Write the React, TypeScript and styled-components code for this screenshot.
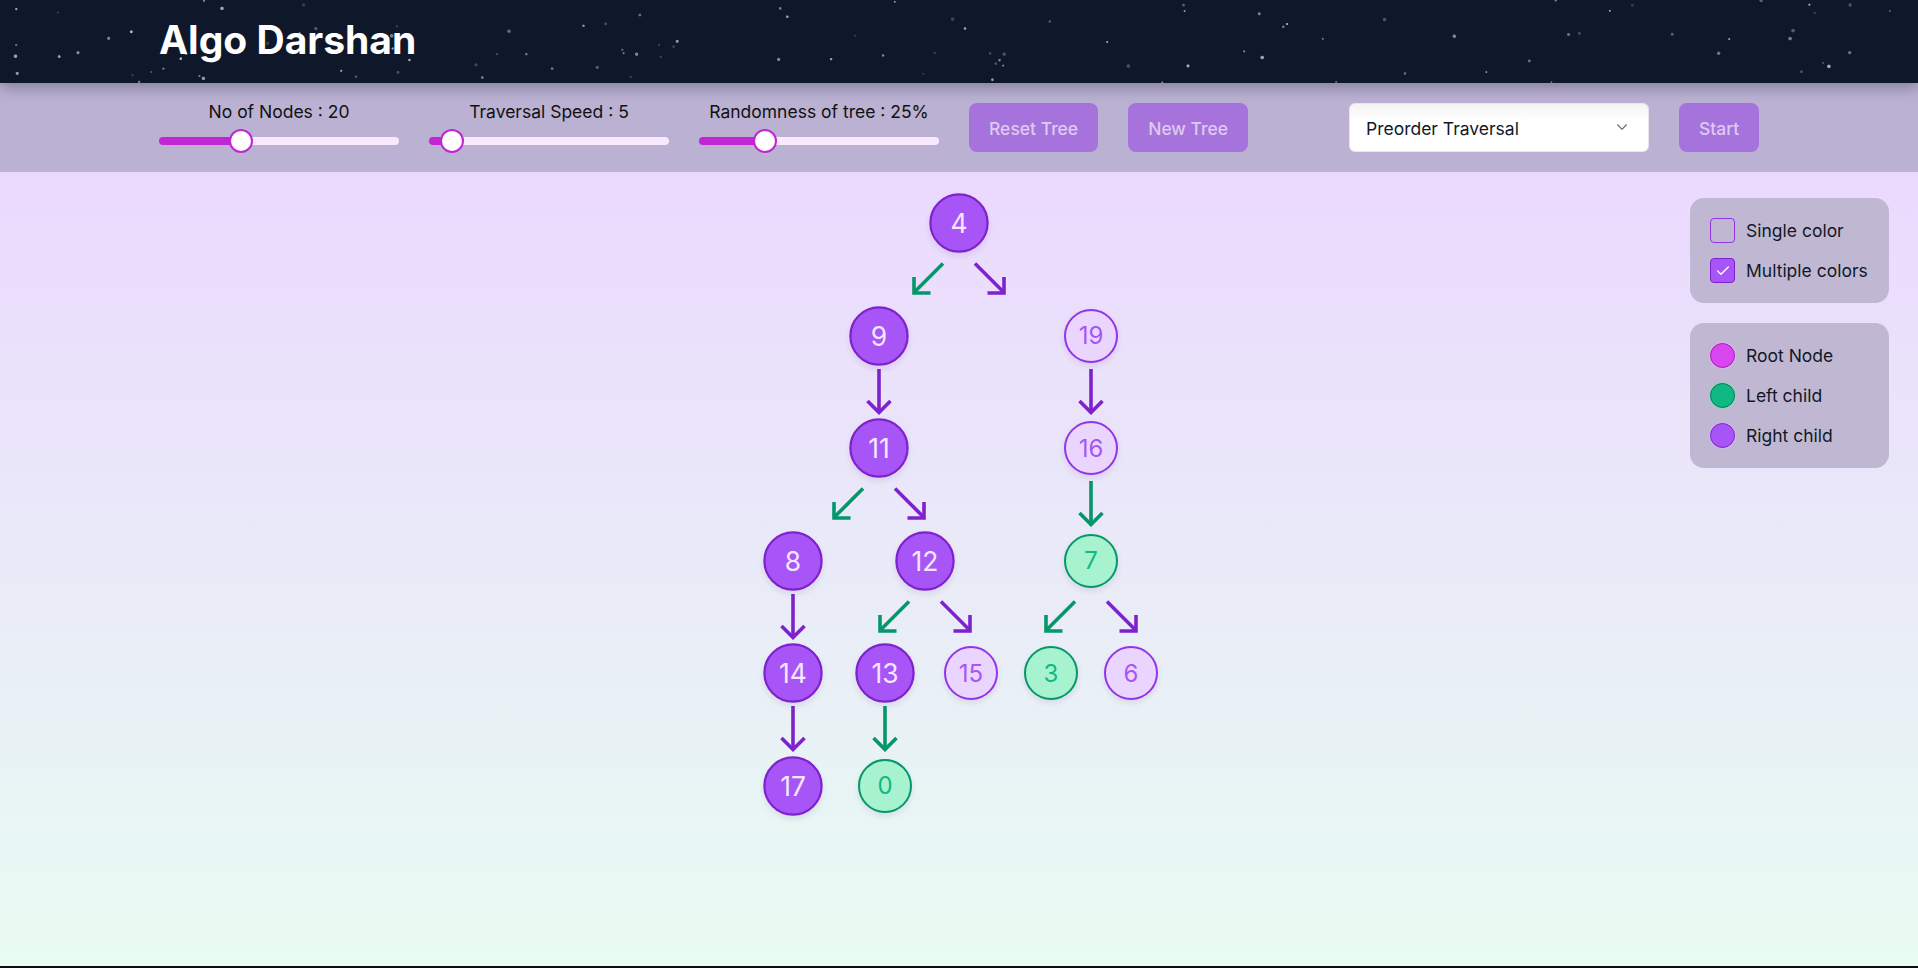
import React from 'react';
import styled, { createGlobalStyle } from 'styled-components';
import { Check, ChevronDown } from 'lucide-react';

type Side = 'root' | 'left' | 'right';

interface TreeNode {
  value: number;
  side: Side;
  visited: boolean;
  left?: TreeNode;
  right?: TreeNode;
}

const n = (value: number, side: Side, visited: boolean, left?: TreeNode, right?: TreeNode): TreeNode => ({
  value,
  side,
  visited,
  left,
  right,
});

// tree as it stands mid-way through the preorder walk
const tree: TreeNode = n(
  4,
  'root',
  true,
  n(
    9,
    'left',
    true,
    undefined,
    n(
      11,
      'right',
      true,
      n(8, 'left', true, undefined, n(14, 'right', true, undefined, n(17, 'right', true))),
      n(12, 'right', true, n(13, 'left', true, n(0, 'left', false)), n(15, 'right', false))
    )
  ),
  n(19, 'right', false, undefined, n(16, 'right', false, n(7, 'left', false, n(3, 'left', false), n(6, 'right', false))))
);

function makeStars(count: number, w: number, h: number) {
  let seed = 20240611;
  const rnd = () => {
    seed = (seed * 16807) % 2147483647;
    return seed / 2147483647;
  };
  const layers: string[] = [];
  for (let i = 0; i < count; i++) {
    const x = (rnd() * w).toFixed(1);
    const y = (rnd() * h).toFixed(1);
    const r = (0.45 + rnd() * 0.9).toFixed(2);
    const a = (0.15 + rnd() * 0.5).toFixed(2);
    layers.push(
      `radial-gradient(circle at ${x}px ${y}px, rgba(255,255,255,${a}) 0, rgba(255,255,255,${a}) ${r}px, transparent ${(
        parseFloat(r) + 0.9
      ).toFixed(2)}px)`
    );
  }
  return layers.join(',');
}

const stars = makeStars(105, 1918, 83);

const GlobalStyle = createGlobalStyle`
  html, body {
    margin: 0;
    padding: 0;
    background: #0b0d14;
  }
  body {
    font-family: Inter, "Noto Sans", "Liberation Sans", sans-serif;
  }
  * {
    box-sizing: border-box;
  }
`;

const Page = styled.div`
  display: flex;
  flex-direction: column;
  height: calc(100vh - 2px);
`;

const Header = styled.header`
  position: relative;
  z-index: 2;
  height: 83px;
  flex-shrink: 0;
  background-color: #0f172a;
  background-image: ${stars};
  box-shadow: 0 4px 14px rgba(15, 23, 42, 0.35);
`;

const Container = styled.div`
  width: 1600px;
  height: 100%;
  margin: 0 auto;
  display: flex;
  align-items: center;
`;

const Title = styled.h1`
  margin: 0;
  padding-bottom: 4px;
  font-size: 39px;
  font-weight: 700;
  line-height: 1;
  color: #ffffff;
`;

const Toolbar = styled.div`
  height: 89px;
  flex-shrink: 0;
  background: #bbb1d3;
`;

const ToolRow = styled(Container)`
  gap: 30px;

  & > * {
    flex-shrink: 0;
  }
`;

const SliderGroup = styled.label`
  width: 240px;
  display: flex;
  flex-direction: column;
  align-items: center;
  gap: 7px;
  margin-bottom: 1px;
`;

const SliderLabel = styled.span`
  font-size: 17.5px;
  line-height: 20px;
  color: #111111;
  white-space: nowrap;
`;

const Range = styled.input`
  -webkit-appearance: none;
  appearance: none;
  width: 100%;
  height: 24px;
  margin: 0;
  background: transparent;

  &::-webkit-slider-runnable-track {
    height: 8px;
    border-radius: 4px;
    background: linear-gradient(to right, #c026d3 var(--fill), #fae8ff var(--fill));
  }

  &::-webkit-slider-thumb {
    -webkit-appearance: none;
    width: 24px;
    height: 24px;
    margin-top: -8px;
    border-radius: 50%;
    background: #ffffff;
    border: 2px solid #c026d3;
  }
`;

const Button = styled.button`
  height: 49px;
  padding: 2px 20px 0;
  border: none;
  border-radius: 8px;
  background: #a673dc;
  color: #dccaf0;
  font-family: inherit;
  font-size: 17.5px;
  font-weight: 500;
  white-space: nowrap;
`;

const SelectWrap = styled.div`
  position: relative;
  width: 300px;
  height: 49px;
  margin-left: 71px;
  color: #6b7280;

  svg {
    position: absolute;
    right: 18px;
    top: 15px;
    pointer-events: none;
  }
`;

const Select = styled.select`
  -webkit-appearance: none;
  appearance: none;
  width: 100%;
  height: 100%;
  padding: 2px 44px 0 16px;
  border: 1px solid #e5e7eb;
  border-radius: 6px;
  background: linear-gradient(to bottom, #f4f4f5, #ffffff 35%);
  color: #111827;
  font-family: inherit;
  font-size: 17.5px;
`;

const Main = styled.main`
  flex: 1;
  display: grid;
  grid-template-columns: 1fr auto 1fr;
  align-items: start;
  background: linear-gradient(to bottom, #ebd9fe, #e8fcf2);
`;

const TreeArea = styled.div`
  grid-column: 2;
  padding-top: 21px;
`;

const Side = styled.aside`
  grid-column: 3;
  justify-self: end;
  margin: 26px 29px 0 0;
  display: flex;
  flex-direction: column;
  gap: 20px;
`;

const Card = styled.div`
  width: 199px;
  padding: 20px;
  border-radius: 14px;
  background: #c0b8d2;
  display: flex;
  flex-direction: column;
  gap: 15px;
`;

const Option = styled.label`
  display: flex;
  align-items: center;
  gap: 11px;
  height: 25px;
  font-size: 17.5px;
  color: #111827;
  white-space: nowrap;
`;

const Box = styled.span<{ $checked: boolean }>`
  width: 25px;
  height: 25px;
  border-radius: 4px;
  border: 1.5px solid ${p => (p.$checked ? '#7e22ce' : '#9333ea')};
  background: ${p => (p.$checked ? '#a855f7' : 'transparent')};
  display: flex;
  align-items: center;
  justify-content: center;
  color: #ffffff;
`;

const dotTones = {
  root: { fill: '#d946ef', edge: '#a21caf', ring: 'rgba(240, 171, 252, 0.6)' },
  left: { fill: '#10b981', edge: '#047857', ring: 'rgba(110, 231, 183, 0.6)' },
  right: { fill: '#a855f7', edge: '#7e22ce', ring: 'rgba(216, 180, 254, 0.6)' },
};

const Dot = styled.span<{ $tone: Side }>`
  width: 25px;
  height: 25px;
  border-radius: 50%;
  background: ${p => dotTones[p.$tone].fill};
  border: 1.5px solid ${p => dotTones[p.$tone].edge};
  box-shadow: 0 0 0 1px ${p => dotTones[p.$tone].ring};
`;

/* tree */

const Branch = styled.div`
  display: flex;
  flex-direction: column;
  align-items: center;
`;

const Slot = styled.div<{ $visited: boolean }>`
  width: ${p => (p.$visited ? 66 : 54)}px;
  height: 60px;
  display: flex;
  align-items: center;
  justify-content: center;
`;

const nodeTones = {
  visited: { bg: '#a855f7', edge: '#7e22ce', text: '#f3e8ff' },
  left: { bg: '#a7f3d0', edge: '#059669', text: '#10b981' },
  right: { bg: '#ead5ff', edge: '#9333ea', text: '#a855f7' },
};

const Circle = styled.div<{ $tone: 'visited' | 'left' | 'right'; $visited: boolean }>`
  width: 54px;
  height: 54px;
  flex-shrink: 0;
  border-radius: 50%;
  border: 2.5px solid ${p => nodeTones[p.$tone].edge};
  background: ${p => nodeTones[p.$tone].bg};
  color: ${p => nodeTones[p.$tone].text};
  display: flex;
  align-items: center;
  justify-content: center;
  font-size: 24px;
  font-weight: 400;
  box-shadow: 0 3px 6px rgba(60, 20, 100, 0.1);
  transform: scale(${p => (p.$visited ? 1.1 : 1)});
`;

const ArrowRow = styled.div`
  height: 52.5px;
  display: flex;
  align-items: center;
  justify-content: center;
  gap: 28px;
`;

const Kids = styled.div`
  display: flex;
  align-items: flex-start;
  gap: 26px;
`;

const arrowColor = (side: Side) => (side === 'left' ? '#059669' : '#7e22ce');

function DiagArrow({ side }: { side: 'left' | 'right' }) {
  const flip = side === 'right';
  return (
    <svg width="34" height="34" viewBox="0 0 34 34" fill="none" stroke={arrowColor(side)} strokeWidth="3.6">
      <g transform={flip ? 'translate(34 0) scale(-1 1)' : undefined}>
        <path d="M32 1.5 L3 30.5" />
        <path d="M3 15 V31 H19.5" strokeLinejoin="miter" />
      </g>
    </svg>
  );
}

function DownArrow({ side }: { side: Side }) {
  return (
    <svg width="26" height="46" viewBox="0 0 26 46" fill="none" stroke={arrowColor(side)} strokeWidth="3.6">
      <path d="M13 0 V43" />
      <path d="M1.5 32 L13 43.5 L24.5 32" strokeLinejoin="miter" />
    </svg>
  );
}

function Subtree({ node }: { node: TreeNode }) {
  const kids = [node.left, node.right].filter(Boolean) as TreeNode[];
  const tone = node.visited ? 'visited' : node.side === 'left' ? 'left' : 'right';
  return (
    <Branch>
      <Slot $visited={node.visited}>
        <Circle $tone={tone} $visited={node.visited}>
          {node.value}
        </Circle>
      </Slot>
      {kids.length > 0 && (
        <ArrowRow>
          {kids.length === 2 ? (
            <>
              <DiagArrow side="left" />
              <DiagArrow side="right" />
            </>
          ) : (
            <DownArrow side={kids[0].side} />
          )}
        </ArrowRow>
      )}
      {kids.length > 0 && (
        <Kids>
          {kids.map(k => (
            <Subtree key={k.value} node={k} />
          ))}
        </Kids>
      )}
    </Branch>
  );
}

const sliders = [
  { label: 'No of Nodes', value: 20, min: 1, max: 60, unit: '' },
  { label: 'Traversal Speed', value: 5, min: 0, max: 100, unit: '' },
  { label: 'Randomness of tree', value: 25, min: 0, max: 100, unit: '%' },
];

const fillFor = (value: number, min: number, max: number) => {
  const f = (value - min) / (max - min);
  return `${((12 + 216 * f) / 240) * 100}%`;
};

export default function App() {
  const [multi, setMulti] = React.useState(true);
  return (
    <>
      <GlobalStyle />
      <Page>
        <Header>
          <Container>
            <Title>Algo Darshan</Title>
          </Container>
        </Header>
        <Toolbar>
          <ToolRow>
            {sliders.map(s => (
              <SliderGroup key={s.label}>
                <SliderLabel>
                  {s.label} : {s.value}
                  {s.unit}
                </SliderLabel>
                <Range
                  type="range"
                  min={s.min}
                  max={s.max}
                  defaultValue={s.value}
                  style={{ ['--fill' as string]: fillFor(s.value, s.min, s.max) } as React.CSSProperties}
                />
              </SliderGroup>
            ))}
            <Button>Reset Tree</Button>
            <Button>New Tree</Button>
            <SelectWrap>
              <Select defaultValue="pre">
                <option value="pre">Preorder Traversal</option>
                <option value="in">Inorder Traversal</option>
                <option value="post">Postorder Traversal</option>
              </Select>
              <ChevronDown size={18} strokeWidth={1.5} />
            </SelectWrap>
            <Button>Start</Button>
          </ToolRow>
        </Toolbar>
        <Main>
          <TreeArea>
            <Subtree node={tree} />
          </TreeArea>
          <Side>
            <Card>
              <Option onClick={() => setMulti(false)}>
                <Box $checked={!multi}>{!multi && <Check size={16} strokeWidth={2} />}</Box>
                Single color
              </Option>
              <Option onClick={() => setMulti(true)}>
                <Box $checked={multi}>{multi && <Check size={16} strokeWidth={2} />}</Box>
                Multiple colors
              </Option>
            </Card>
            <Card>
              <Option>
                <Dot $tone="root" />
                Root Node
              </Option>
              <Option>
                <Dot $tone="left" />
                Left child
              </Option>
              <Option>
                <Dot $tone="right" />
                Right child
              </Option>
            </Card>
          </Side>
        </Main>
      </Page>
    </>
  );
}
